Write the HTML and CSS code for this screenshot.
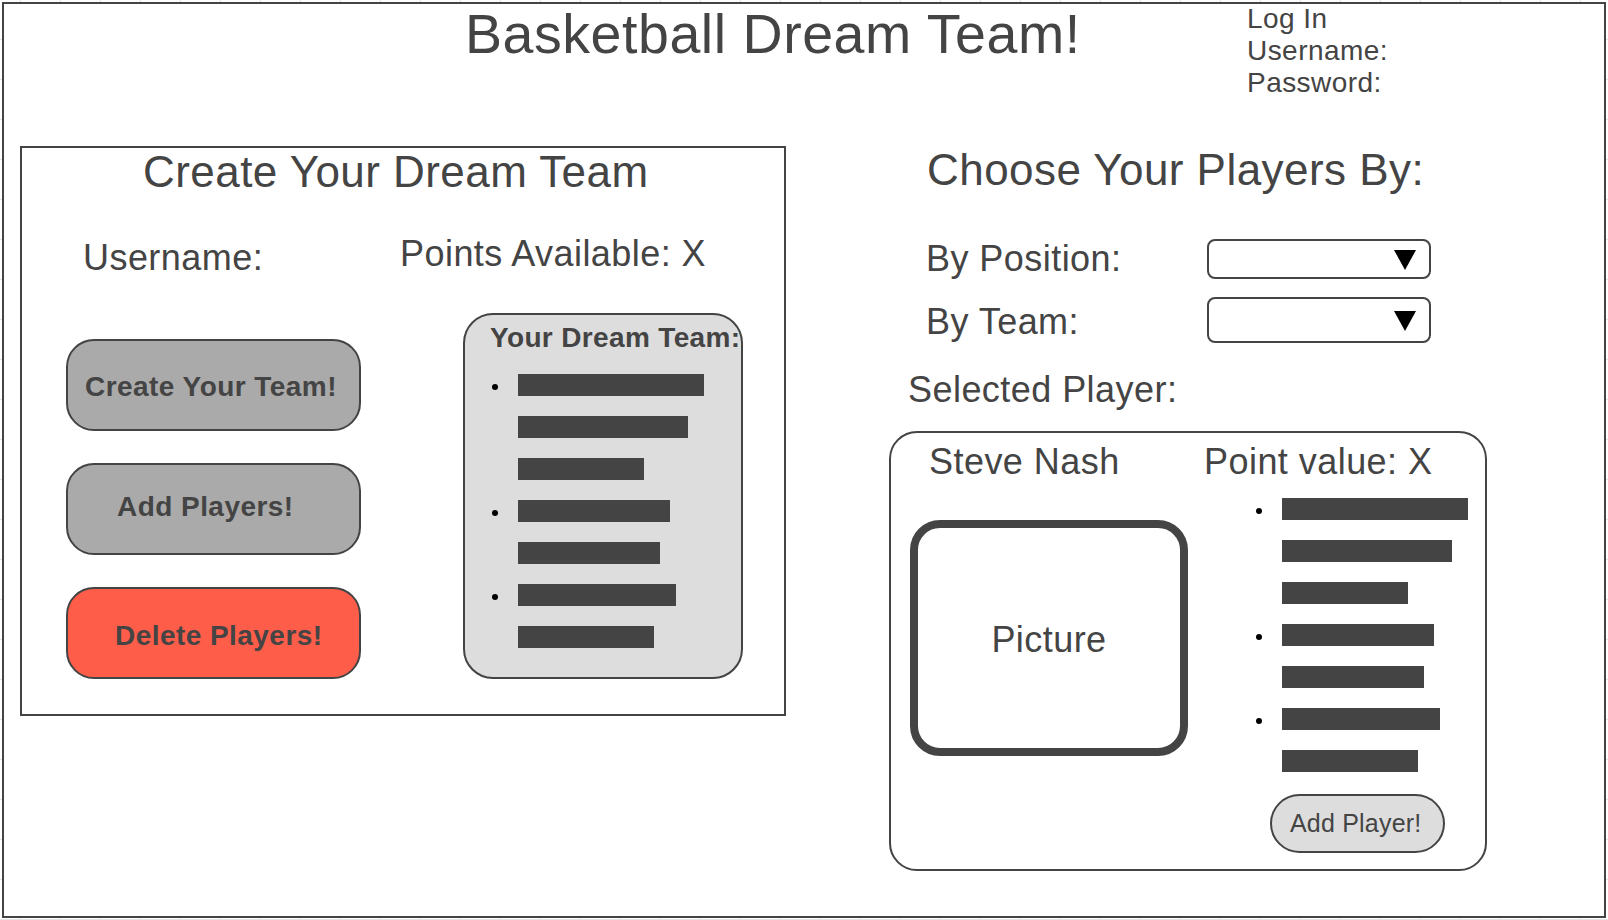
FILE: index.html
```html
<!DOCTYPE html>
<html lang="en">
<head>
<meta charset="utf-8">
<title>Basketball Dream Team!</title>
<link rel="stylesheet" href="styles.css">
</head>
<body>
<div class="frame">
  <header class="header">
    <h1 class="title">Basketball Dream Team!</h1>
    <div class="login">
      <div>Log In</div>
      <div>Username:</div>
      <div>Password:</div>
    </div>
  </header>
  <main class="main">
    <section class="create">
      <h2 class="create-title">Create Your Dream Team</h2>
      <div class="create-body">
        <div class="create-left">
          <div class="label label-user">Username:</div>
          <div class="actions">
            <button class="btn btn-create">Create Your Team!</button>
            <button class="btn btn-add">Add Players!</button>
            <button class="btn btn-delete">Delete Players!</button>
          </div>
        </div>
        <div class="create-right">
          <div class="label label-points">Points Available: X</div>
          <div class="team-box">
            <div class="team-title">Your Dream Team:</div>
            <ul class="bars team-bars">
              <li class="bar-row"><span class="dot"></span><span class="bar" style="width:186px"></span></li>
              <li class="bar-row"><span class="dot hidden"></span><span class="bar" style="width:170px"></span></li>
              <li class="bar-row"><span class="dot hidden"></span><span class="bar" style="width:126px"></span></li>
              <li class="bar-row"><span class="dot"></span><span class="bar" style="width:152px"></span></li>
              <li class="bar-row"><span class="dot hidden"></span><span class="bar" style="width:142px"></span></li>
              <li class="bar-row"><span class="dot"></span><span class="bar" style="width:158px"></span></li>
              <li class="bar-row"><span class="dot hidden"></span><span class="bar" style="width:136px"></span></li>
            </ul>
          </div>
        </div>
      </div>
    </section>

    <section class="choose">
      <h2 class="choose-title">Choose Your Players By:</h2>
      <div class="filter-row filter-position">
        <div class="label filter-label">By Position:</div>
        <div class="select select-position"><span class="caret"></span></div>
      </div>
      <div class="filter-row filter-team">
        <div class="label filter-label">By Team:</div>
        <div class="select select-team"><span class="caret"></span></div>
      </div>
      <div class="label selected-label">Selected Player:</div>
      <div class="card">
        <div class="card-left">
          <div class="label player-name">Steve Nash</div>
          <div class="picture">Picture</div>
        </div>
        <div class="card-right">
          <div class="label point-value">Point value: X</div>
          <ul class="bars card-bars">
            <li class="bar-row"><span class="dot"></span><span class="bar" style="width:186px"></span></li>
            <li class="bar-row"><span class="dot hidden"></span><span class="bar" style="width:170px"></span></li>
            <li class="bar-row"><span class="dot hidden"></span><span class="bar" style="width:126px"></span></li>
            <li class="bar-row"><span class="dot"></span><span class="bar" style="width:152px"></span></li>
            <li class="bar-row"><span class="dot hidden"></span><span class="bar" style="width:142px"></span></li>
            <li class="bar-row"><span class="dot"></span><span class="bar" style="width:158px"></span></li>
            <li class="bar-row"><span class="dot hidden"></span><span class="bar" style="width:136px"></span></li>
          </ul>
          <button class="add-player">Add Player!</button>
        </div>
      </div>
    </section>
  </main>
</div>
</body>
</html>
```

FILE: styles.css
```css
html, body {
  margin: 0;
  height: 920px;
  overflow: hidden;
}

body {
  padding: 2px;
  box-sizing: border-box;
  font-family: "Liberation Sans", Arial, sans-serif;
  color: #444;
  letter-spacing: 0.45px;
  background-color: #fff;
  background-image:
    linear-gradient(to right, #e4e4e4 1px, transparent 1px),
    linear-gradient(to bottom, #e4e4e4 1px, transparent 1px);
  background-size: 40px 40px;
  background-position: 20px 39px;
}

.frame {
  width: 1604px;
  height: 916px;
  box-sizing: border-box;
  border: 2px solid #444;
  background: #fff;
}

/* Header */
.header {
  display: flex;
  align-items: flex-start;
  height: 142px;
}

.title {
  margin: 0 0 0 461px;
  font-size: 55.5px;
  line-height: 60px;
  font-weight: normal;
  letter-spacing: 0.55px;
  white-space: nowrap;
}

.login {
  margin: -1px 0 0 auto;
  width: 357px;
  font-size: 28px;
  line-height: 32px;
}

/* Main */
.main {
  display: flex;
  align-items: flex-start;
}

.label {
  font-size: 36px;
  line-height: 42px;
  white-space: nowrap;
}

/* Create box */
.create {
  margin-left: 16px;
  width: 766px;
  height: 570px;
  box-sizing: border-box;
  border: 2px solid #444;
}

.create-title {
  margin: 0;
  padding-left: 121px;
  font-size: 44px;
  line-height: 48px;
  font-weight: normal;
  white-space: nowrap;
}

.create-body {
  display: flex;
  padding-left: 44px;
}

.create-left {
  width: 334px;
}

.label-user {
  margin-top: 40.5px;
  padding-left: 17px;
}

.actions {
  margin-top: 60.5px;
  display: flex;
  flex-direction: column;
  gap: 32px;
}

.btn {
  width: 295px;
  height: 92px;
  box-sizing: border-box;
  border: 2px solid #444;
  border-radius: 28px;
  background: #aaa;
  color: #444;
  font-family: inherit;
  font-size: 28px;
  font-weight: bold;
  letter-spacing: 0.45px;
  text-align: left;
  padding: 0;
  white-space: nowrap;
}

.btn-create { padding: 4px 0 0 17px; }
.btn-add { padding: 0 0 4px 49px; }
.btn-delete {
  padding: 6px 0 0 47px;
  background: #fe5d4a;
}

.label-points {
  margin-top: 36.5px;
}

.team-box {
  margin: 38.5px 0 0 63px;
  width: 280px;
  height: 366px;
  box-sizing: border-box;
  border: 2px solid #444;
  border-radius: 30px;
  background: #ddd;
  padding: 7px 0 0 25px;
}

.team-title {
  font-size: 28px;
  line-height: 32px;
  font-weight: bold;
  letter-spacing: 0.35px;
  white-space: nowrap;
}

/* Bullet bar lists */
.bars {
  list-style: none;
  padding: 0;
  margin: 0;
}

.team-bars {
  margin: 20px 0 0 2px;
}

.bar-row {
  display: flex;
  align-items: center;
  height: 22px;
  margin-bottom: 20px;
}

.dot {
  width: 6px;
  height: 6px;
  border-radius: 50%;
  background: #000;
  margin: 4px 20px 0 0;
  flex: none;
}

.dot.hidden {
  visibility: hidden;
}

.bar {
  height: 22px;
  background: #444;
}

/* Choose column */
.choose {
  margin-left: 103px;
  width: 598px;
}

.choose-title {
  margin: 0;
  padding-left: 38px;
  font-size: 44px;
  line-height: 48px;
  font-weight: normal;
  white-space: nowrap;
}

.filter-row {
  display: flex;
  align-items: center;
  height: 46px;
  padding-left: 37px;
}

.filter-position { margin-top: 42px; }
.filter-team { margin-top: 15px; }

.filter-label {
  width: 281px;
}

.filter-team .filter-label {
  margin-top: 4px;
}

.select {
  width: 224px;
  box-sizing: border-box;
  border: 2px solid #444;
  border-radius: 8px;
  background: #fff;
  display: flex;
  justify-content: flex-end;
  align-items: center;
  padding-right: 13px;
}

.select-position { height: 40px; }
.select-team { height: 46px; }

.caret {
  width: 0;
  height: 0;
  border-left: 11.5px solid transparent;
  border-right: 11.5px solid transparent;
  border-top: 20px solid #000;
  margin-top: 2px;
}

.selected-label {
  margin-top: 25.5px;
  padding-left: 19px;
}

.card {
  margin-top: 20.5px;
  width: 598px;
  height: 440px;
  box-sizing: border-box;
  border: 2px solid #444;
  border-radius: 28px;
  display: flex;
}

.card-left {
  width: 313px;
}

.player-name {
  padding: 7.5px 0 0 38px;
}

.picture {
  margin: 37.5px 0 0 19px;
  width: 278px;
  height: 236px;
  box-sizing: border-box;
  border: 8px solid #444;
  border-radius: 30px;
  display: flex;
  align-items: center;
  justify-content: center;
  padding-top: 4px;
  font-size: 36px;
  line-height: 42px;
}

.card-right {
  display: flex;
  flex-direction: column;
  align-items: flex-start;
}

.point-value {
  padding-top: 7.5px;
}

.card-bars {
  margin: 15.5px 0 0 52px;
}

.add-player {
  margin: 2px 0 0 66px;
  width: 175px;
  height: 59px;
  box-sizing: border-box;
  border: 2px solid #444;
  border-radius: 30px;
  background: #ddd;
  color: #444;
  font-family: inherit;
  font-size: 25px;
  font-weight: normal;
  letter-spacing: 0.2px;
  text-align: left;
  padding: 0 0 0 18px;
  white-space: nowrap;
}
```
